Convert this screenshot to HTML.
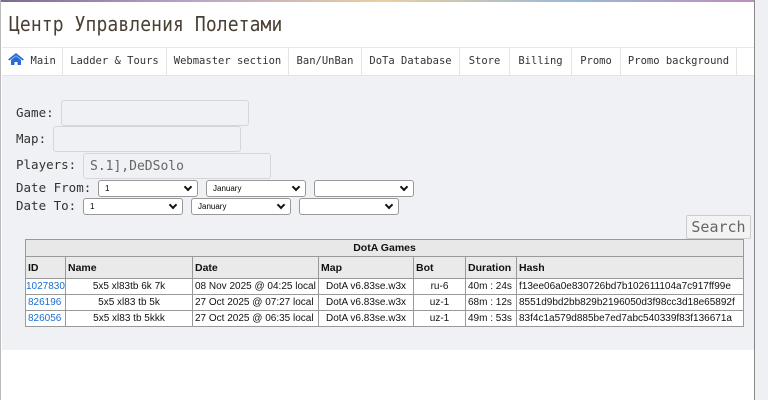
<!DOCTYPE html>
<html><head><meta charset="utf-8"><style>
*{box-sizing:border-box;margin:0;padding:0}
body{width:768px;height:400px;background:#fff;position:relative;overflow:hidden;font-family:"DejaVu Sans Mono","Liberation Mono",monospace;}
.topline{position:absolute;left:0;top:0;width:768px;height:2px;background:linear-gradient(90deg,#7a6c8c,#b9a4c8,#e8d0a0,#9ab8d8,#c08ab8)}
.right{position:absolute;left:754px;top:0;width:14px;height:400px;background:#eef0f4;border-left:1px solid #888}
.left{position:absolute;left:0;top:0;width:1px;height:400px;background:#bbb}
h1{position:absolute;left:9px;top:13px;font-size:18px;font-weight:normal;color:#4a3f33;letter-spacing:0.1px;font-family:"DejaVu Sans Mono",monospace;transform:scaleY(1.12);transform-origin:top left}
.nav{position:absolute;left:2px;top:47px;width:752px;height:29px;border-top:1px solid #e8e8e8;border-bottom:1px solid #e2e4e8;background:#fff}
.nav span{position:absolute;top:0;height:27px;line-height:26px;font-size:10.5px;color:#333;border-right:1px solid #e5e5e5;text-align:center}
.gray{position:absolute;left:2px;top:76px;width:752px;height:274px;background:#eff1f5}
.lbl{position:absolute;left:16px;font-size:12.5px;color:#333}
.inp{position:absolute;height:26px;background:#eff1f5;border:1px solid #d4d6da;border-radius:3px;font-size:13px;color:#666;padding:5px 6px}
.sel{position:absolute;height:17px;background:#fff;border:1px solid #999;border-radius:3px;font-size:8px;color:#000;padding:3px 6px;font-family:"Liberation Sans",sans-serif}
.sel:after{content:"";position:absolute;right:6px;top:3px;width:4px;height:4px;border-right:2px solid #111;border-bottom:2px solid #111;transform:rotate(45deg)}
.btn{position:absolute;left:686px;top:215px;width:65px;height:24px;background:#f3f3f3;border:1px solid #ccc;border-radius:2px;font-size:15px;color:#666;text-align:center;line-height:22px}
table{position:absolute;left:25px;top:239px;width:718px;table-layout:fixed;border-collapse:collapse;font-family:"Liberation Sans",Arial,sans-serif;font-size:10px;color:#111;background:#fff}
td,th{border:1px solid #999;padding:0 2px;white-space:nowrap;overflow:hidden}
th{background:#eaeaea;font-weight:bold;text-align:left;height:22px;font-size:10.5px}
.cap{text-align:center;height:17px;background:#e8e8e8}
td{height:16px}
td.c{text-align:center}
a{color:#1a6fd0;text-decoration:none}
</style></head><body>
<div class="topline"></div>
<div class="left"></div>
<div class="right"></div>
<h1>Центр Управления Полетами</h1>
<div class="nav">
<span style="left:0;width:61px"><svg width="16" height="12" viewBox="0 0 16 12" style="vertical-align:-1px"><path d="M8 0 L16 6.5 L14.5 7.5 L8 2.5 L1.5 7.5 L0 6.5Z M3 7 L8 3 L13 7 V12 H9.5 V9 H6.5 V12 H3Z" fill="#2a6bd6"/></svg> Main</span>
<span style="left:61px;width:104px">Ladder &amp; Tours</span>
<span style="left:165px;width:122px">Webmaster section</span>
<span style="left:287px;width:73px">Ban/UnBan</span>
<span style="left:360px;width:98px">DoTa Database</span>
<span style="left:458px;width:50px">Store</span>
<span style="left:508px;width:62px">Billing</span>
<span style="left:570px;width:49px">Promo</span>
<span style="left:619px;width:116px">Promo background</span>
</div>
<div class="gray"></div>
<div class="lbl" style="top:105px">Game:</div>
<div class="inp" style="left:61px;top:100px;width:188px"></div>
<div class="lbl" style="top:131px">Map:</div>
<div class="inp" style="left:53px;top:126px;width:188px"></div>
<div class="lbl" style="top:157px">Players:</div>
<div class="inp" style="left:83px;top:153px;width:188px">S.1],DeDSolo</div>
<div class="lbl" style="top:180px">Date From:</div>
<div class="sel" style="left:98px;top:180px;width:100px">1</div>
<div class="sel" style="left:206px;top:180px;width:100px">January</div>
<div class="sel" style="left:314px;top:180px;width:100px"></div>
<div class="lbl" style="top:198px">Date To:</div>
<div class="sel" style="left:83px;top:198px;width:100px">1</div>
<div class="sel" style="left:191px;top:198px;width:100px">January</div>
<div class="sel" style="left:299px;top:198px;width:100px"></div>
<div class="btn">Search</div>
<table>
<colgroup><col style="width:40px"><col style="width:127px"><col style="width:126px"><col style="width:95px"><col style="width:52px"><col style="width:51px"><col style="width:227px"></colgroup>
<tr><th colspan="7" class="cap" style="text-align:center">DotA Games</th></tr>
<tr><th>ID</th><th>Name</th><th>Date</th><th>Map</th><th>Bot</th><th>Duration</th><th>Hash</th></tr>
<tr><td style="padding:0"><a>1027830</a></td><td class="c">5x5 xl83tb 6k 7k</td><td>08 Nov 2025 @ 04:25 local</td><td class="c">DotA v6.83se.w3x</td><td class="c">ru-6</td><td>40m : 24s</td><td>f13ee06a0e830726bd7b102611104a7c917ff99e</td></tr>
<tr><td><a>826196</a></td><td class="c">5x5 xl83 tb 5k</td><td>27 Oct 2025 @ 07:27 local</td><td class="c">DotA v6.83se.w3x</td><td class="c">uz-1</td><td>68m : 12s</td><td>8551d9bd2bb829b2196050d3f98cc3d18e65892f</td></tr>
<tr><td><a>826056</a></td><td class="c">5x5 xl83 tb 5kkk</td><td>27 Oct 2025 @ 06:35 local</td><td class="c">DotA v6.83se.w3x</td><td class="c">uz-1</td><td>49m : 53s</td><td>83f4c1a579d885be7ed7abc540339f83f136671a</td></tr>
</table>
</body></html>
